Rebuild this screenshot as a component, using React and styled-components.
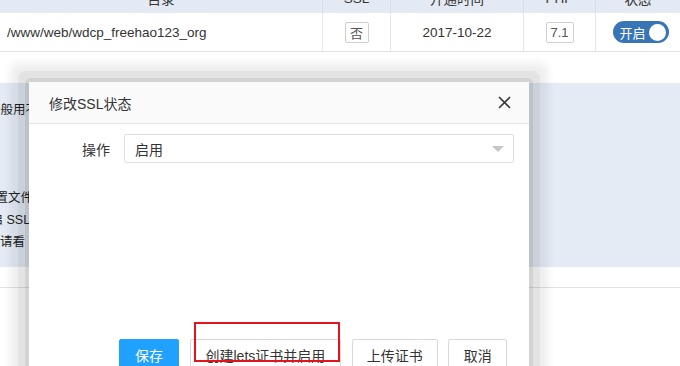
import React from 'react';
import styled, { createGlobalStyle } from 'styled-components';

const GlobalStyle = createGlobalStyle`
  html, body {
    margin: 0;
    padding: 0;
    background: #fff;
  }
  body {
    font-family: "Liberation Sans", "Noto Sans CJK SC", sans-serif;
    color: #333;
    overflow: hidden;
  }
`;

const columns = '323px 68px 133px 72px 1fr';

const Page = styled.div`
  position: relative;
  width: 680px;
  height: 366px;
  overflow: hidden;
`;

const HeadRow = styled.div`
  display: grid;
  grid-template-columns: ${columns};
  height: 30px;
  margin-top: -17px;
  background: #e4eaf3;
  font-size: 13.5px;
`;

const BodyRow = styled.div`
  display: grid;
  grid-template-columns: ${columns};
  height: 39px;
  box-sizing: border-box;
  border-bottom: 1px solid #e2e2e2;
  font-size: 13.5px;
`;

const Cell = styled.div`
  display: flex;
  align-items: center;
  justify-content: ${(p) => (p.left ? 'flex-start' : 'center')};
  padding-left: ${(p) => (p.left ? '7px' : '0')};
  border-right: ${(p) => (p.last ? 'none' : `1px solid ${p.head ? '#d9e0ea' : '#e6e6e6'}`)};
  color: #333;
`;

const Tag = styled.span`
  display: inline-flex;
  align-items: center;
  justify-content: center;
  width: ${(p) => p.w}px;
  height: 21px;
  box-sizing: border-box;
  border: 1px solid #cfcfcf;
  border-radius: 2px;
  font-size: 13px;
  color: #555;
`;

const Toggle = styled.span`
  display: inline-flex;
  align-items: center;
  gap: 3px;
  height: 22px;
  padding: 0 3px 0 6px;
  margin-left: 6px;
  border-radius: 11px;
  background: #3775b6;
  color: #fff;
  font-size: 13px;
`;

const Knob = styled.span`
  width: 17px;
  height: 17px;
  border-radius: 50%;
  background: #fff;
`;

const NotePanel = styled.div`
  margin-top: 31px;
  height: 184px;
  box-sizing: border-box;
  padding-top: 16px;
  background: #e4ebf5;
  font-size: 12.5px;
  line-height: 22px;
  overflow: hidden;
`;

const NoteLine = styled.div`
  margin-left: ${(p) => p.indent}px;
  margin-top: ${(p) => (p.spaced ? '66px' : '0')};
  white-space: nowrap;
  color: #222;
`;

const FooterBar = styled.div`
  margin-top: 20px;
  border-top: 1px solid #e2e2e2;
  height: 80px;
`;

const Modal = styled.div`
  position: absolute;
  left: 29px;
  top: 82px;
  width: 500px;
  height: 320px;
  background: #fff;
  border-radius: 2px;
  box-shadow: 0 0 0 4px rgba(0, 0, 0, 0.07), 0 0 0 11px rgba(0, 0, 0, 0.04),
    0 0 8px 19px rgba(0, 0, 0, 0.07);
  display: flex;
  flex-direction: column;
`;

const ModalHeader = styled.div`
  display: flex;
  align-items: center;
  justify-content: space-between;
  height: 42px;
  box-sizing: border-box;
  padding: 0 18px 0 20px;
  background: #fafafa;
  border-bottom: 1px solid #e5e5e5;
  font-size: 14px;
  color: #333;
`;

const CloseBtn = styled.span`
  display: flex;
  width: 13px;
  height: 13px;
  cursor: pointer;
`;

const ModalBody = styled.div`
  padding-top: 10px;
  display: flex;
  flex-direction: column;
`;

const FormRow = styled.div`
  display: flex;
  align-items: center;
`;

const Label = styled.div`
  width: 81px;
  text-align: right;
  font-size: 14px;
  color: #333;
`;

const SelectBox = styled.div`
  display: flex;
  align-items: center;
  margin-left: 14px;
  width: 390px;
  height: 29px;
  box-sizing: border-box;
  padding-left: 10px;
  border: 1px solid #e0e0e0;
  border-radius: 2px;
  font-size: 14px;
  color: #333;
`;

const Arrow = styled.span`
  margin-left: auto;
  margin-right: 9px;
  width: 0;
  height: 0;
  border-left: 6px solid transparent;
  border-right: 6px solid transparent;
  border-top: 6px solid #c6c6c6;
`;

const ButtonBar = styled.div`
  display: flex;
  gap: 10.5px;
  margin-top: 176px;
  padding-left: 90px;
`;

const Button = styled.button`
  height: 32px;
  box-sizing: border-box;
  padding: 0 ${(p) => p.pad || 14}px;
  border: 1px solid ${(p) => (p.primary ? '#20a0ff' : '#d9d9d9')};
  border-radius: 2px;
  background: ${(p) => (p.primary ? '#20a0ff' : '#fff')};
  color: ${(p) => (p.primary ? '#fff' : '#333')};
  font-family: inherit;
  font-size: 14px;
  cursor: pointer;
`;

const RedMark = styled.div`
  position: absolute;
  left: 194px;
  top: 322px;
  width: 146px;
  height: 40px;
  box-sizing: border-box;
  border: 2px solid #e3141d;
  pointer-events: none;
`;

export default function App() {
  return (
    <>
      <GlobalStyle />
      <Page>
        <HeadRow>
          <Cell head>目录</Cell>
          <Cell head>SSL</Cell>
          <Cell head>开通时间</Cell>
          <Cell head>PHP</Cell>
          <Cell head last>状态</Cell>
        </HeadRow>
        <BodyRow>
          <Cell left>/www/web/wdcp_freehao123_org</Cell>
          <Cell>
            <Tag w={24}>否</Tag>
          </Cell>
          <Cell>2017-10-22</Cell>
          <Cell>
            <Tag w={28}>7.1</Tag>
          </Cell>
          <Cell last>
            <Toggle>
              开启
              <Knob />
            </Toggle>
          </Cell>
        </BodyRow>

        <NotePanel>
          <NoteLine indent={-12}>一般用不到，默认即可</NoteLine>
          <NoteLine indent={-17} spaced>
            配置文件
          </NoteLine>
          <NoteLine indent={-47}>如需开启 SSL</NoteLine>
          <NoteLine indent={-25}>详情请看</NoteLine>
        </NotePanel>
        <FooterBar />

        <Modal>
          <ModalHeader>
            <span>修改SSL状态</span>
            <CloseBtn>
              <svg width="13" height="13" viewBox="0 0 13 13">
                <path d="M1 1 L12 12 M12 1 L1 12" stroke="#333" strokeWidth="1.6" />
              </svg>
            </CloseBtn>
          </ModalHeader>
          <ModalBody>
            <FormRow>
              <Label>操作</Label>
              <SelectBox>
                启用
                <Arrow />
              </SelectBox>
            </FormRow>
            <ButtonBar>
              <Button primary pad={15}>保存</Button>
              <Button pad={15}>创建lets证书并启用</Button>
              <Button>上传证书</Button>
              <Button pad={14.5}>取消</Button>
            </ButtonBar>
          </ModalBody>
        </Modal>

        <RedMark />
      </Page>
    </>
  );
}
